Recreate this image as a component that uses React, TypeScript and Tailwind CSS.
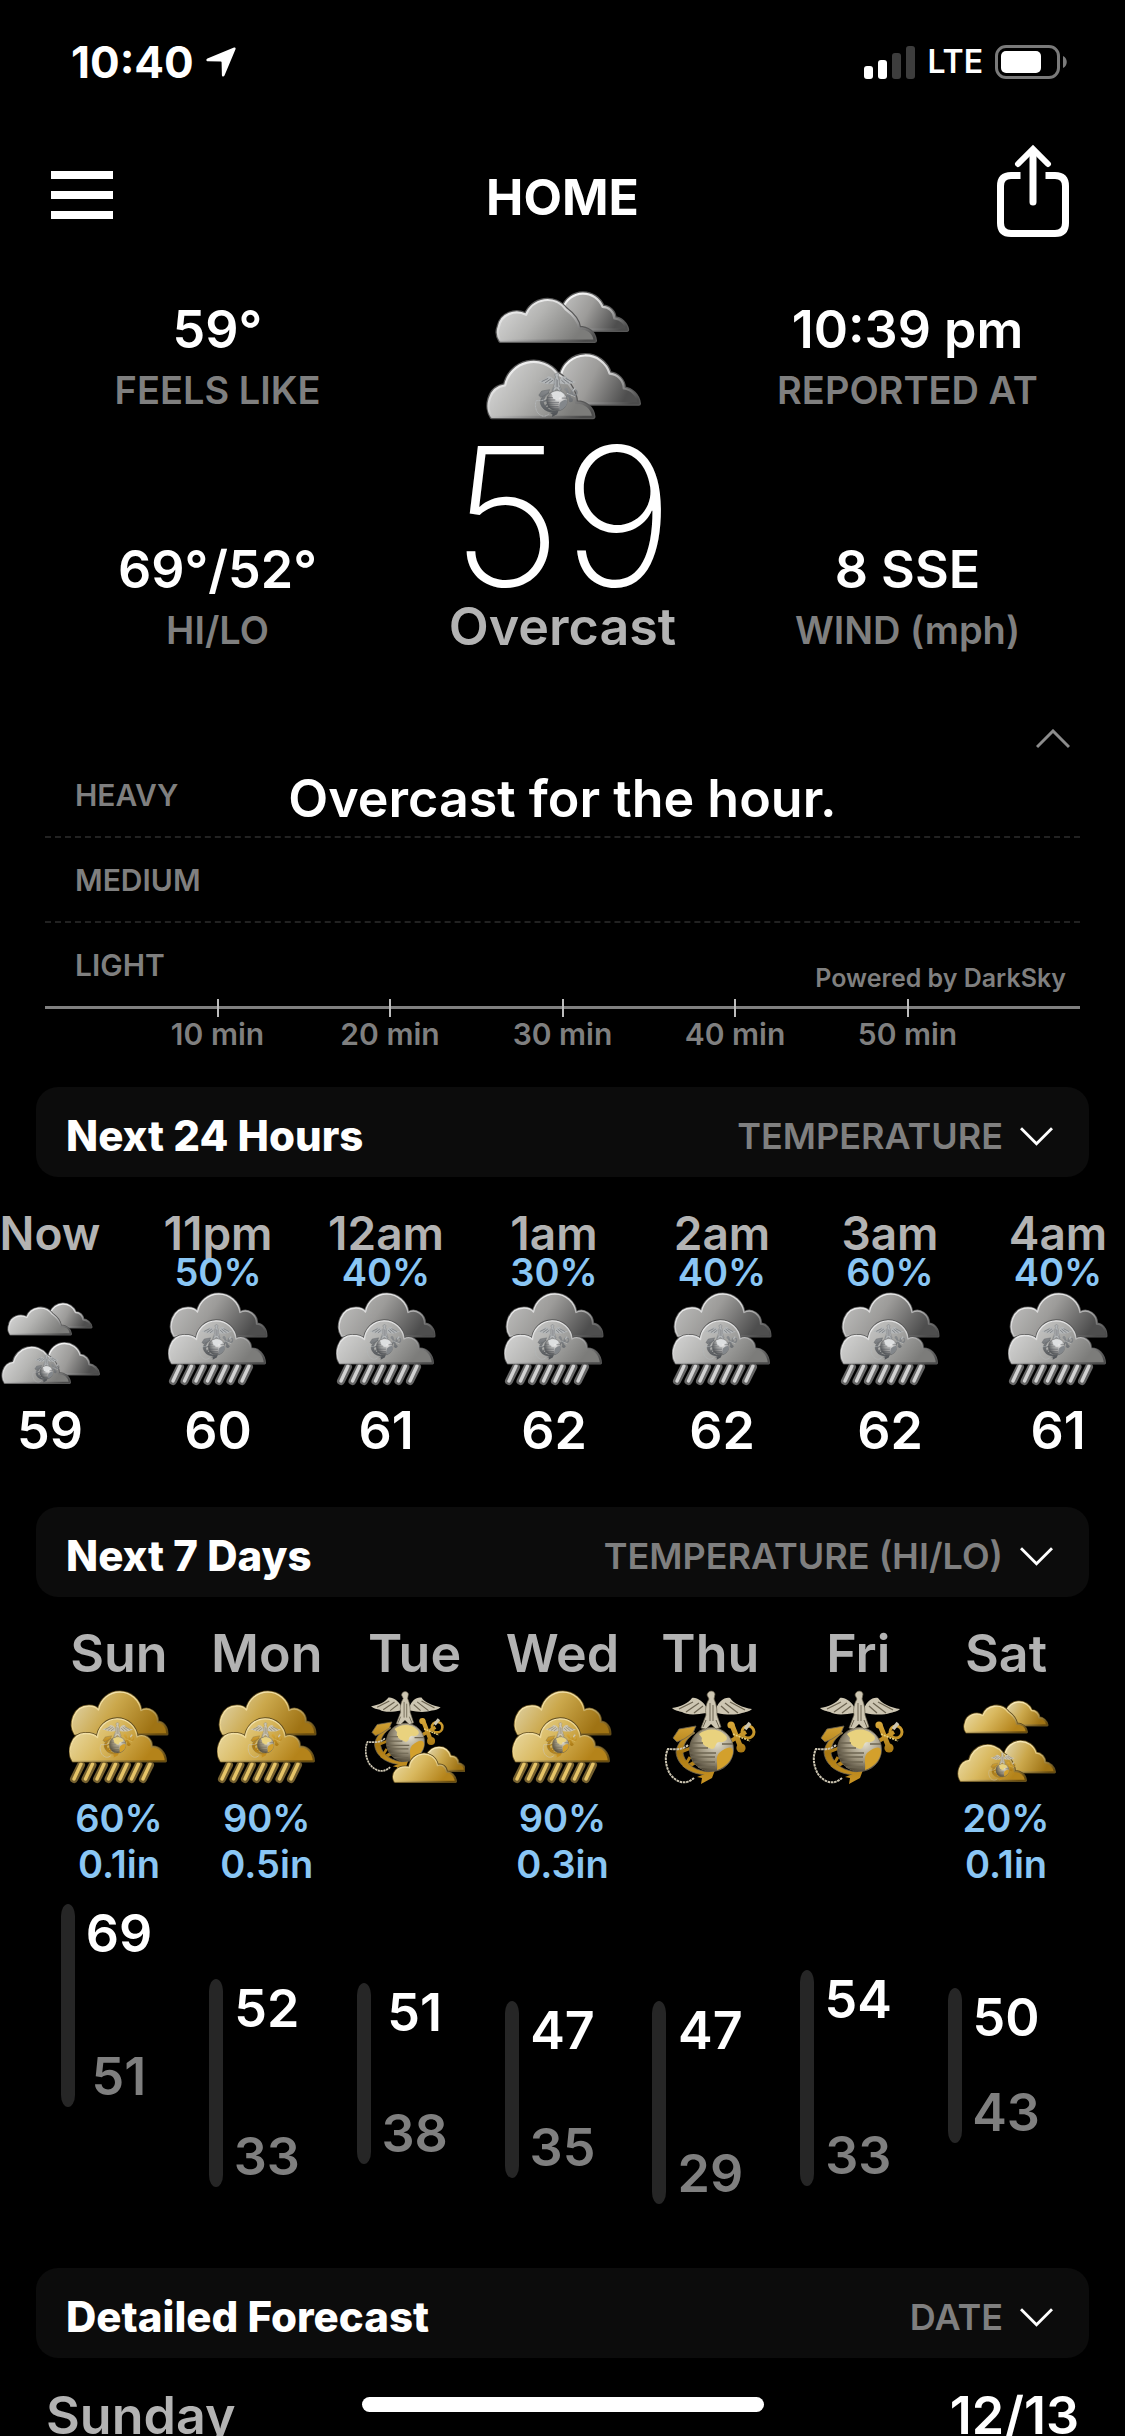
import React from "react";

type Tone = "silver" | "gold";
type IconKind = "overcast" | "rain" | "clear" | "partly";

/* ---------- shared paint for the weather artwork ---------- */

function ArtDefs() {
  return (
    <svg className="absolute h-0 w-0" aria-hidden="true">
      <defs>
        <linearGradient id="silver-front" x1="0" y1="0" x2="1" y2="0.35">
          <stop offset="0" stopColor="#dcdcdc" />
          <stop offset="0.5" stopColor="#b4b4b2" />
          <stop offset="1" stopColor="#7c7c7a" />
        </linearGradient>
        <linearGradient id="silver-back" x1="0" y1="0" x2="1" y2="0.3">
          <stop offset="0" stopColor="#c2c2c1" />
          <stop offset="0.5" stopColor="#9c9b99" />
          <stop offset="1" stopColor="#4e4e4e" />
        </linearGradient>
        <linearGradient id="silver-edge" x1="0" y1="0" x2="0.9" y2="1">
          <stop offset="0" stopColor="#ffffff" />
          <stop offset="0.5" stopColor="#d0d0d0" />
          <stop offset="1" stopColor="#4a4a4a" />
        </linearGradient>
        <linearGradient id="gold-front" x1="0" y1="0" x2="1" y2="0.35">
          <stop offset="0" stopColor="#ecdfae" />
          <stop offset="0.5" stopColor="#d9b960" />
          <stop offset="1" stopColor="#b4831a" />
        </linearGradient>
        <linearGradient id="gold-back" x1="0" y1="0" x2="1" y2="0.3">
          <stop offset="0" stopColor="#e2d8b2" />
          <stop offset="0.5" stopColor="#cba84c" />
          <stop offset="1" stopColor="#9f7314" />
        </linearGradient>
        <linearGradient id="gold-edge" x1="0" y1="0" x2="0.9" y2="1">
          <stop offset="0" stopColor="#fdf3cc" />
          <stop offset="0.5" stopColor="#e8cf86" />
          <stop offset="1" stopColor="#6a4c0c" />
        </linearGradient>
        <radialGradient id="globe-silver" cx="0.62" cy="0.35" r="0.7">
          <stop offset="0" stopColor="#f2f2f2" />
          <stop offset="0.55" stopColor="#a9a9a9" />
          <stop offset="1" stopColor="#4b4d50" />
        </radialGradient>
        <radialGradient id="globe-gold" cx="0.62" cy="0.35" r="0.7">
          <stop offset="0" stopColor="#e6e1cf" />
          <stop offset="0.6" stopColor="#9b927c" />
          <stop offset="1" stopColor="#4a4232" />
        </radialGradient>
        <linearGradient id="brass" gradientUnits="userSpaceOnUse" x1="0" y1="35" x2="0" y2="97">
          <stop offset="0" stopColor="#d8a83a" />
          <stop offset="0.5" stopColor="#a97812" />
          <stop offset="1" stopColor="#c99424" />
        </linearGradient>
        <linearGradient id="steel" gradientUnits="userSpaceOnUse" x1="0" y1="35" x2="0" y2="97">
          <stop offset="0" stopColor="#8a8d90" />
          <stop offset="1" stopColor="#4c4f53" />
        </linearGradient>
      </defs>
    </svg>
  );
}

function Emblem({ tone, transform }: { tone: Tone; transform?: string }) {
  const gold = tone === "gold";
  const metal = gold ? "url(#brass)" : "url(#steel)";
  const wing = gold ? "#cdc6b2" : "#b3b6b8";
  const shade = gold ? "#6d6552" : "#54585c";
  const land = gold ? "#d3a02c" : "#83878b";
  const landLight = gold ? "#e9d27e" : "#dddfe0";
  return (
    <g transform={transform}>
      {/* anchor */}
      <path d="M86 45 L27 80" stroke={metal} strokeWidth="4" fill="none" />
      <path
        d="M33 44 C24 49 17 56 16 65 C17 78 30 89 52 88 L53 85 C36 85 25 77 23 66 C23 57 27 51 35 46 Z"
        fill={metal}
        stroke={shade}
        strokeWidth="0.8"
      />
      <path d="M13 51 L19 42 L36 39 L33 46 L24 52 L17 55 Z" fill={metal} stroke={shade} strokeWidth="0.8" />
      <path d="M37 90 L55 83 L52 91 L41 97 L42 91 Z" fill={metal} />
      <path d="M18 66 L31 61 M24 80 L30 70" stroke={metal} strokeWidth="3" />
      <circle cx="88" cy="45" r="6" fill="none" stroke={metal} strokeWidth="3" />
      <path d="M72 38 L81 61" stroke={metal} strokeWidth="5" strokeLinecap="round" />
      <circle cx="71" cy="38" r="3.600" fill={metal} />
      <circle cx="81" cy="61" r="4.600" fill={metal} />
      <path d="M73 47 L90 54" stroke={landLight} strokeWidth="1.6" strokeDasharray="2 1" />
      <path d="M85 42 L90 36" stroke={wing} strokeWidth="3.600" />
      {/* rope */}
      <path
        d="M28 58 C22 64 12 62 8 62 C4 70 6 80 10 87 C16 95 25 99 34 91"
        fill="none"
        stroke={wing}
        strokeWidth="2"
        strokeDasharray="2.6 0.7"
      />
      {/* globe */}
      <circle cx="51.500" cy="62.500" r="22" fill={gold ? "url(#globe-gold)" : "url(#globe-silver)"} stroke={shade} strokeWidth="0.8" />
      <path d="M39 47 C46 41 58 41 64 47 C70 51 66 56 59 55 C54 56 57 61 52 62 C46 60 40 57 42 51 Z" fill={landLight} />
      <path d="M59 66 C66 60 73 58 73 65 C72 73 66 80 57 83 C58 76 55 71 59 66 Z" fill={land} />
      <path
        d="M31 56 H43 M30 61 H48 M30 66 H56 M31 70 H55 M34 75 H55 M38 80 H55 M62 57 H73"
        stroke={shade}
        strokeWidth="1.3"
      />
      {/* eagle */}
      <path
        d="M47 22 C44 14 36 10 32 11 C29 16 20 20 12 21 C15 24 19 24 22 25 C26 28 36 28 46 26 Z"
        fill={wing}
      />
      <path
        d="M56 22 C59 14 64 10 70 11 C73 16 83 21 92 22 C89 25 85 25 82 26 C76 28 66 28 57 26 Z"
        fill={wing}
      />
      <path
        d="M19 22 L33 15 M26 25 L39 16 M34 26 L43 19 M85 23 L70 15 M78 26 L65 16 M69 26 L61 19"
        stroke={shade}
        strokeWidth="1.3"
      />
      <path
        d="M47 8 C48 3 54 3 55 7 L54 12 C57 18 57 24 57 28 L61 40 L56 42 L51 37 L46 42 L41 41 L46 28 C45 22 46 17 49 12 Z"
        fill={wing}
        stroke={shade}
        strokeWidth="0.7"
      />
      <path d="M50 16 V34 M53 18 V34 M46 33 L43 40 M56 33 L59 40" stroke={shade} strokeWidth="1" />
    </g>
  );
}

function Cloud({ d, tone, layer }: { d: string; tone: Tone; layer: "front" | "back" }) {
  const gold = tone === "gold";
  const fill = gold
    ? layer === "front" ? "url(#gold-front)" : "url(#gold-back)"
    : layer === "front" ? "url(#silver-front)" : "url(#silver-back)";
  return (
    <>
      <path d={d} fill="none" stroke={gold ? "#5f4c1e" : "#585858"} strokeWidth="3" strokeLinejoin="round" />
      <path d={d} fill={fill} stroke={gold ? "url(#gold-edge)" : "url(#silver-edge)"} strokeWidth="1.4" strokeLinejoin="round" />
    </>
  );
}

const RAIN = [12, 23.5, 35, 46.5, 58, 69.5, 81];

function WeatherIcon({ kind, tone, label, className }: { kind: IconKind; tone: Tone; label: string; className: string }) {
  return (
    <svg viewBox="0 0 100 100" className={className} role="img" aria-label={label}>
      {kind === "overcast" && (
        <>
          <Cloud tone={tone} layer="back" d="M50.500 24 A13.300 13.300 0 0 1 75.500 23.500 A7.500 7.500 0 0 1 83 30.800 A9 9 0 0 1 91 38 H50 Z" />
          <Cloud tone={tone} layer="front" d="M10.500 45 A9.800 9.800 0 0 1 9.500 36 C11 28 20 25 26.800 28.500 A14.500 14.500 0 0 1 52 25 C56 28 60 32 60.500 37 C66 37 70 40 70.500 45 Z" />
          <Cloud tone={tone} layer="back" d="M49 67 A16 16 0 0 1 80 66 A9.500 9.500 0 0 1 89 75.500 A11 11 0 0 1 98.500 85 H50 Z" />
          <Cloud tone={tone} layer="front" d="M5 93.500 C1 88 2.500 75 13.500 73.500 A18.500 18.500 0 0 1 46.500 66 C52 69 58 76 58.500 84.500 C64 84 69 88 69.500 93.500 Z" />
          <Emblem tone={tone} transform="translate(31 64.500) scale(.3)" />
        </>
      )}
      {kind === "rain" && (
        <>
          {RAIN.map((x) => (
            <g key={x} strokeLinecap="round">
              <path d={`M${x} 78 L${x - 7} 92`} stroke={tone === "gold" ? "#75602f" : "#666"} strokeWidth="8" />
              <path d={`M${x} 77 L${x - 7} 92`} stroke={tone === "gold" ? "#e6c468" : "#d2d2d2"} strokeWidth="3.400" />
            </g>
          ))}
          <Cloud tone={tone} layer="back" d="M6 47 C0 38 4 19 20 19 C25 19 28 21 29.500 23 A21.500 21.500 0 0 1 72 23.500 C80 19 89 26 88.500 35 C94 35 98 40 98 47 Z" />
          <Cloud tone={tone} layer="front" d="M4 74 C-2 65 2 46 17 46.500 C22 46.500 26 48 28.500 50.500 A19.800 19.800 0 0 1 68 50 C75 46 83 52 82.500 60 C90 59 96 66 96.500 74 Z" />
          <Emblem tone={tone} transform="translate(29 34) scale(.38)" />
        </>
      )}
      {kind === "clear" && <Emblem tone={tone} />}
      {kind === "partly" && (
        <>
          <Emblem tone={tone} transform="translate(-4.400 1) scale(.87)" />
          <Cloud tone={tone} layer="back" d="M62 69 C66 58 82 57 85.500 69.500 C90 69 93 72 93 76.500 C97 77 99.500 80 99.500 83.500 H62 Z" />
          <Cloud tone={tone} layer="front" d="M30 94.500 C26 87 32 78 44.500 80.500 C46 64 69 62 72.500 78.500 C77 77 81 80 81.500 85 C86 85 90 89 90.500 94.500 Z" />
        </>
      )}
    </svg>
  );
}

/* ---------- small glyphs ---------- */

function Chevron({ up = false, className }: { up?: boolean; className: string }) {
  return (
    <svg viewBox="0 0 34 20" className={className} fill="none" stroke="currentColor" strokeWidth="3" aria-hidden="true">
      <path d={up ? "M1 18 L17 2 L33 18" : "M1 2 L17 18 L33 2"} />
    </svg>
  );
}

function StatusBar() {
  return (
    <div className="flex h-[124px] items-center justify-between pr-[57px] pl-[71px]">
      <div className="flex items-center gap-3">
        <span className="text-[44px] leading-none font-bold">10:40</span>
        <svg viewBox="0 0 30 30" className="h-[30px] w-[30px]" fill="currentColor" aria-label="Location in use">
          <path d="M28 .6 C29 .2 30 1 29.500 2.200 L18.500 28.500 C18 30 16 30 15.900 28.300 L15.600 15.400 Q15.600 14.600 14.800 14.600 L1.800 14.300 C0 14.200 -.2 12.300 1.400 11.600 Z" />
        </svg>
      </div>
      <div className="flex items-center gap-3">
        <svg viewBox="0 0 51 33" className="h-[33px] w-[51px]" aria-label="Signal: 2 of 4 bars">
          <rect x="0" y="20" width="9" height="13" rx="3" fill="#fff" />
          <rect x="14" y="14" width="9" height="19" rx="3" fill="#fff" />
          <rect x="28" y="7" width="9" height="26" rx="3" fill="#3d3d3d" />
          <rect x="42" y="0" width="9" height="33" rx="3" fill="#3d3d3d" />
        </svg>
        <span className="text-[32px] leading-none font-semibold">LTE</span>
        <svg viewBox="0 0 73 34" className="h-[34px] w-[73px]" aria-label="Battery">
          <rect x="1.500" y="1.500" width="62" height="31" rx="9.500" fill="none" stroke="#7a7a7a" strokeWidth="3" />
          <rect x="6" y="6" width="40" height="22" rx="5" fill="#fff" />
          <path d="M68 11 C73 13 73 21 68 23 Z" fill="#7a7a7a" />
        </svg>
      </div>
    </div>
  );
}

function NavBar() {
  return (
    <header className="flex h-[146px] items-center justify-between px-[51px]">
      <button type="button" aria-label="Menu" className="flex w-20 flex-col gap-3 pb-1">
        <span className="h-2 w-[62px] bg-white" />
        <span className="h-2 w-[62px] bg-white" />
        <span className="h-2 w-[62px] bg-white" />
      </button>
      <h1 className="text-[50px] leading-none font-bold">HOME</h1>
      <button type="button" aria-label="Share" className="flex w-20 justify-end pr-1">
        <svg viewBox="0 0 74 106" className="h-[106px] w-[74px]" fill="none" stroke="#fff" strokeWidth="7">
          <path d="M24.500 31.500 H15 Q4.500 31.500 4.500 42 V79 Q4.500 89.500 15 89.500 H59 Q69.500 89.500 69.500 79 V42 Q69.500 31.500 59 31.500 H49.500" />
          <path d="M37 7 V58" strokeLinecap="round" />
          <path d="M22 20 L37 5 L52 20" strokeLinecap="round" strokeWidth="6" />
        </svg>
      </button>
    </header>
  );
}

function Metric({ value, label }: { value: string; label: string }) {
  return (
    <div className="text-center leading-[60px]">
      <div className="text-[52px] font-semibold">{value}</div>
      <div className="text-[38px] font-semibold text-[#7f7f7f]">{label}</div>
    </div>
  );
}

function Conditions() {
  return (
    <section className="grid grid-cols-3 px-[45px]">
      <div className="flex flex-col gap-[120px] pt-[30px]">
        <Metric value="59°" label="FEELS LIKE" />
        <Metric value="69°/52°" label="HI/LO" />
      </div>
      <div className="flex flex-col items-center">
        <WeatherIcon kind="overcast" tone="silver" label="Overcast" className="h-[157px] w-[157px]" />
        <div className="text-[192px] leading-[178px] font-extralight">59</div>
        <div className="text-[52px] leading-[44px] font-semibold text-[#b3b3b3]">Overcast</div>
      </div>
      <div className="flex flex-col gap-[120px] pt-[30px]">
        <Metric value="10:39 pm" label="REPORTED AT" />
        <Metric value="8 SSE" label="WIND (mph)" />
      </div>
    </section>
  );
}

function HourRain() {
  return (
    <section className="mx-[45px] pt-[67px] font-semibold text-[#7f7f7f]">
      <div className="flex h-6 justify-end pr-[10px]">
        <button type="button" aria-label="Collapse">
          <Chevron up className="h-5 w-[34px] text-[#8c8c8c]" />
        </button>
      </div>
      <div className="grid h-[85px] grid-cols-[1fr_auto_1fr] items-end px-[30px] pb-[11px]">
        <span className="text-[30px] leading-[60px]">HEAVY</span>
        <span className="text-[52px] leading-[52px] text-white">Overcast for the hour.</span>
      </div>
      <div className="flex h-[85px] items-end border-t-2 border-dashed border-[#222] px-[30px] pb-[11px]">
        <span className="text-[30px] leading-[60px]">MEDIUM</span>
      </div>
      <div className="flex h-[85px] items-end justify-between border-t-2 border-dashed border-[#222] pr-[14px] pb-[11px] pl-[30px]">
        <span className="text-[30px] leading-[60px]">LIGHT</span>
        <span className="text-[25px] leading-[34px]">Powered by DarkSky</span>
      </div>
      <div className="grid grid-cols-12 border-t-[3px] border-[#808080]">
        {["10 min", "20 min", "30 min", "40 min", "50 min"].map((t) => (
          <div key={t} className="col-span-2 -mt-[10px] flex flex-col items-center first:col-start-2">
            <span className="h-[18px] w-[2px] bg-[#bdbdbd]" />
            <span className="text-[30px] leading-[34px]">{t}</span>
          </div>
        ))}
      </div>
    </section>
  );
}

function PanelHeader({ title, options }: { title: string; options: string[] }) {
  return (
    <div className="mx-9 flex h-[90px] items-center justify-between rounded-[22px] bg-[#0c0c0c] pt-2 pr-9 pl-[30px]">
      <h2 className="text-[42px] leading-none font-extrabold">{title}</h2>
      <label className="flex items-center gap-[17px]">
        <select
          aria-label={`${title} shows`}
          className="appearance-none bg-transparent text-right text-[36px] leading-[44px] font-semibold text-[#7f7f7f] [field-sizing:content]"
        >
          {options.map((o) => (
            <option key={o}>{o}</option>
          ))}
        </select>
        <Chevron className="h-5 w-[33px] text-white" />
      </label>
    </div>
  );
}

const HOURS: { time: string; pct?: string; temp: number }[] = [
  { time: "Now", temp: 59 },
  { time: "11pm", pct: "50%", temp: 60 },
  { time: "12am", pct: "40%", temp: 61 },
  { time: "1am", pct: "30%", temp: 62 },
  { time: "2am", pct: "40%", temp: 62 },
  { time: "3am", pct: "60%", temp: 62 },
  { time: "4am", pct: "40%", temp: 61 },
];

function Hourly() {
  return (
    <div className="overflow-hidden pt-[34px]">
      <ol className="-ml-[34px] flex font-semibold">
        {HOURS.map((h) => (
          <li key={h.time} className="flex w-[168px] shrink-0 flex-col items-center">
            <span className="text-[46px] leading-[44px] text-[#b3b3b3]">{h.time}</span>
            <span className="h-[34px] text-[38px] leading-[34px] text-[#8ac6f4]">{h.pct}</span>
            <WeatherIcon
              kind={h.pct ? "rain" : "overcast"}
              tone="silver"
              label={h.pct ? "Rain" : "Overcast"}
              className="h-[100px] w-[100px]"
            />
            <span className="text-[52px] leading-[84px]">{h.temp}</span>
          </li>
        ))}
      </ol>
    </div>
  );
}

const DAYS: { day: string; kind: IconKind; pct?: string; rain?: string; hi: number; lo: number }[] = [
  { day: "Sun", kind: "rain", pct: "60%", rain: "0.1in", hi: 69, lo: 51 },
  { day: "Mon", kind: "rain", pct: "90%", rain: "0.5in", hi: 52, lo: 33 },
  { day: "Tue", kind: "partly", hi: 51, lo: 38 },
  { day: "Wed", kind: "rain", pct: "90%", rain: "0.3in", hi: 47, lo: 35 },
  { day: "Thu", kind: "clear", hi: 47, lo: 29 },
  { day: "Fri", kind: "clear", hi: 54, lo: 33 },
  { day: "Sat", kind: "overcast", pct: "20%", rain: "0.1in", hi: 50, lo: 43 },
];

const PX_PER_DEGREE = 4.4;
const BAR_EXTRA = 124;
const MAX_HI = Math.max(...DAYS.map((d) => d.hi));

function Daily() {
  return (
    <ol className="grid grid-cols-7 px-[45px] pt-6 font-semibold">
      {DAYS.map((d) => (
        <li key={d.day} className="flex flex-col items-center">
          <span className="text-[52px] leading-[66px] text-[#b3b3b3]">{d.day}</span>
          <WeatherIcon kind={d.kind} tone="gold" label={d.kind} className="h-[100px] w-[100px]" />
          <div className="flex h-[117px] flex-col items-center pt-2 text-[38px] leading-[46px] text-[#8ac6f4]">
            <span>{d.pct}</span>
            <span>{d.rain}</span>
          </div>
          <div
            className="grid w-full grid-cols-[14px_1fr_14px] px-4"
            style={{
              marginTop: Math.round((MAX_HI - d.hi) * PX_PER_DEGREE),
              height: Math.round((d.hi - d.lo) * PX_PER_DEGREE + BAR_EXTRA),
            }}
          >
            <span className="rounded-[50%/12px] bg-[#262626]" />
            <div className="flex flex-col items-center justify-between text-[52px] leading-[60px]">
              <span>{d.hi}</span>
              <span className="text-[#7f7f7f]">{d.lo}</span>
            </div>
          </div>
        </li>
      ))}
    </ol>
  );
}

export default function App() {
  return (
    <div className="relative h-screen overflow-hidden bg-black font-['Inter',sans-serif] text-white">
      <ArtDefs />
      <StatusBar />
      <NavBar />
      <main>
        <Conditions />
        <HourRain />
        <section className="mt-9">
          <PanelHeader title="Next 24 Hours" options={["TEMPERATURE", "WIND", "HUMIDITY"]} />
          <Hourly />
        </section>
        <section className="mt-[34px]">
          <PanelHeader title="Next 7 Days" options={["TEMPERATURE (HI/LO)", "WIND"]} />
          <Daily />
        </section>
        <section className="mt-16">
          <PanelHeader title="Detailed Forecast" options={["DATE", "SUMMARY"]} />
          <div className="flex justify-between px-[46px] pt-7 text-[52px] leading-[60px] font-semibold">
            <h3 className="text-[#b3b3b3]">Sunday</h3>
            <span>12/13</span>
          </div>
        </section>
      </main>
      <div className="absolute bottom-6 left-1/2 h-[15px] w-[402px] -translate-x-1/2 rounded-full bg-white" />
    </div>
  );
}
